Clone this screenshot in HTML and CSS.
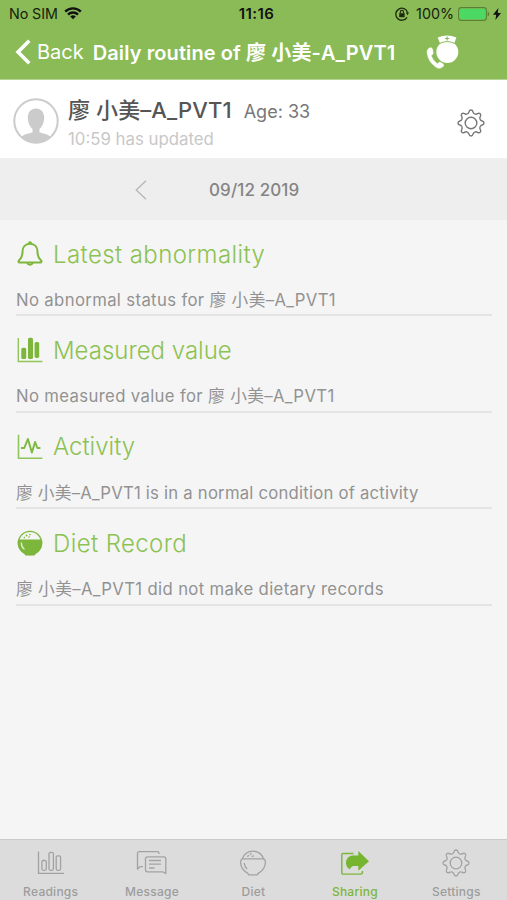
FILE: index.html
```html
<!DOCTYPE html>
<html lang="en">
  <head>
    <meta charset="UTF-8" />
    <meta name="viewport" content="width=device-width, initial-scale=1.0" />
    <title>Daily routine</title>
    <link rel="stylesheet" href="styles.css">
  </head>
  <body>
    <!-- Shared icon shapes -->
    <svg class="defs" width="0" height="0">
      <defs>
        <path id="tooth" d="M-3.75-9.05Q-2.36-9.62-2-11.2Q-1.6-13 0-13Q1.6-13 2-11.2Q2.36-9.62 3.75-9.05" />
        <g id="gear">
          <use href="#tooth" />
          <use href="#tooth" transform="rotate(45)" />
          <use href="#tooth" transform="rotate(90)" />
          <use href="#tooth" transform="rotate(135)" />
          <use href="#tooth" transform="rotate(180)" />
          <use href="#tooth" transform="rotate(225)" />
          <use href="#tooth" transform="rotate(270)" />
          <use href="#tooth" transform="rotate(315)" />
          <circle r="5.8" />
        </g>
      </defs>
    </svg>

    <header class="header">
      <div class="status-bar">
        <div class="status-left">
          <span class="carrier">No SIM</span>
          <svg width="18" height="13" viewBox="0 0 18 13" fill="none" stroke="#111" stroke-width="2.4">
            <path d="M1.2 4.6a11 11 0 0 1 15.6 0M4 7.6a7 7 0 0 1 10 0" />
            <path d="M9 12.3L6.2 9.5a4 4 0 0 1 5.6 0z" fill="#111" stroke="none" />
          </svg>
        </div>
        <div class="clock">11:16</div>
        <div class="status-right">
          <svg width="14" height="14" viewBox="0 0 14 14" fill="none" stroke="#1c2a10">
            <path d="M12.6 5.6A6 6 0 1 0 12 10.3" stroke-width="1.3" />
            <path d="M10.8 5.6h3.2l-1.5 2.6z" fill="#1c2a10" stroke="none" />
            <rect x="4.2" y="6.2" width="5.4" height="4" fill="#1c2a10" stroke="none" />
            <path d="M5.3 6.3V5a1.6 1.6 0 0 1 3.2 0v1.3" stroke-width="1.1" />
          </svg>
          <span class="percent">100%</span>
          <svg class="battery" width="33" height="14" viewBox="0 0 33 14">
            <rect x=".6" y=".6" width="27.8" height="12.8" rx="2.8" fill="none" stroke="#5c7f36" stroke-width="1.1" />
            <rect x="1.8" y="1.8" width="25.4" height="10.4" rx="1.4" fill="#4bd964" />
            <path d="M29.7 4.6a2.6 2.6 0 0 1 0 4.8z" fill="#5c7f36" />
          </svg>
          <svg width="8" height="12" viewBox="0 0 8 12"><path d="M5.4 0L0 6.8h3.2L2.4 12 8 4.9H4.7z" fill="#111" /></svg>
        </div>
      </div>
      <div class="nav-bar">
        <svg class="back-icon" width="17" height="26" viewBox="0 0 17 26"><path d="M14.3 1.7L3 13l11.3 11.3" fill="none" stroke="#fff" stroke-width="3.6" /></svg>
        <span class="back">Back</span>
        <h1 class="title">Daily routine of 廖 小美-A_PVT1</h1>
        <svg class="nurse" width="34" height="35" viewBox="0 0 34 35" fill="#fff">
          <circle cx="21.3" cy="17" r="11" />
          <path d="M11.7 2.6Q21-1.8 30.4 2.6L28.3 8.2Q21.2 4.6 14 8.2z" />
          <path d="M13.2 8.6Q21.2 4.6 29 8.6" fill="none" stroke="#8abb57" stroke-width="1" />
          <path d="M21.1 1.5v4M19.1 3.5h4" stroke="#8abb57" stroke-width="1.2" />
          <path d="M2.1 13.4Q5.7 10.8 7.1 14.5L7.6 18.6Q6.8 20 5.6 20.7Q7.5 25.8 11.4 28.5L13.1 26.8Q14.4 26.3 17.2 28.6Q19.2 30.3 17 32.1Q13.7 35 9.8 32.4Q1.6 26.8.6 17.5Q.5 14.7 2.1 13.4z" stroke="#8abb57" stroke-width=".4" />
        </svg>
      </div>
    </header>

    <section class="profile">
      <svg class="avatar" width="46" height="46" viewBox="0 0 46 46">
        <circle cx="23" cy="23" r="21.7" fill="#fff" stroke="#cbcbcb" stroke-width="2" />
        <path d="M23 10.5c5.2 0 8.4 3.8 8.2 9.8-.2 4.6-2 8.6-4.7 10.7v3.2c3 1.5 8 1.4 10.9 4.4A21 21 0 0 1 8.6 38.6c2.9-3 7.900-2.900 10.900-4.400V31c-2.700-2.100-4.500-6.100-4.700-10.700-.2-6 3-9.800 8.200-9.800z" fill="#cbcbcb" />
      </svg>
      <div class="person">
        <div class="person-row">
          <span class="person-name">廖 小美–A_PVT1</span>
          <span class="age">Age: 33</span>
        </div>
        <div class="updated">10:59 has updated</div>
      </div>
      <svg class="profile-gear" width="28" height="28" viewBox="-14 -14 28 28" fill="none" stroke="#777" stroke-width="1.4"><use href="#gear" /></svg>
    </section>

    <div class="date-bar">
      <svg width="12" height="20" viewBox="0 0 12 20"><path d="M11 .8L1.2 10 11 19.2" fill="none" stroke="#b4b4b4" stroke-width="1.2" /></svg>
      <span class="date">09/12 2019</span>
    </div>

    <main class="records">
      <section class="record">
        <h2 class="record-title">
          <svg width="26" height="26" viewBox="0 0 26 26" fill="none" stroke="#7cb63b" stroke-width="2" stroke-linejoin="round">
            <path d="M13 2.8c-5 0-7.5 3.6-7.5 8 0 5.2-1.2 6.7-3.5 8.6-.9.8-.7 2.2.7 2.2h20.6c1.4 0 1.6-1.4.7-2.2-2.3-1.9-3.5-3.4-3.5-8.6 0-4.4-2.5-8-7.5-8z" />
            <path d="M12 2.2a1 1 0 0 1 2 0M10.3 22a2.8 2.4 0 0 0 5.4 0" />
          </svg>
          <span class="heading heading-wide">Latest abnormality</span>
        </h2>
        <p class="record-text">No abnormal status for 廖 小美–A_PVT1</p>
      </section>
      <section class="record">
        <h2 class="record-title">
          <svg width="26" height="26" viewBox="0 0 26 26" fill="#7cb63b">
            <path d="M1.3 1v23.5H25.4" fill="none" stroke="#8fc559" stroke-width="1.4" />
            <rect x="4.3" y="10.8" width="4.9" height="11.3" rx="1.6" />
            <rect x="11" y=".8" width="5" height="21.3" rx="1.6" />
            <rect x="17.6" y="5" width="4.6" height="15.9" rx="1.6" />
          </svg>
          <span class="heading">Measured value</span>
        </h2>
        <p class="record-text">No measured value for 廖 小美–A_PVT1</p>
      </section>
      <section class="record">
        <h2 class="record-title">
          <svg width="26" height="26" viewBox="0 0 26 26" fill="none" stroke="#8fc559" stroke-width="1.6">
            <path d="M1.5.8v23.4H25.4" />
            <path d="M4 14h3.3L10.9 5l4 13.5 3.2-10.5 2.3 6h3" stroke="#7fba40" stroke-width="2" stroke-linejoin="round" />
          </svg>
          <span class="heading">Activity</span>
        </h2>
        <p class="record-text text-activity">廖 小美–A_PVT1 is in a normal condition of activity</p>
      </section>
      <section class="record">
        <h2 class="record-title">
          <svg width="26" height="26" viewBox="0 0 26 26">
            <circle cx="13" cy="13" r="11.6" fill="none" stroke="#7cb63b" stroke-width="1.3" />
            <path d="M1 9.6h24c1.3 6-1.5 11.3-6.4 13.600l-.8 2.200H8.200l-.8-2.200C2.500 20.900-.3 15.600 1 9.600z" fill="#7cb63b" />
            <path d="M4.4 13c0 3 1 4.8 2.6 5.8" fill="none" stroke="#d9ecc6" stroke-width="1.5" stroke-linecap="round" />
            <g fill="#7cb63b"><circle cx="9.5" cy="5.5" r=".9" /><circle cx="13" cy="4.6" r=".8" /><circle cx="7.3" cy="7.6" r=".8" /><circle cx="12" cy="7" r=".8" /></g>
          </svg>
          <span class="heading heading-wide">Diet Record</span>
        </h2>
        <p class="record-text">廖 小美–A_PVT1 did not make dietary records</p>
      </section>
    </main>

    <nav class="tab-bar">
      <div class="tab">
        <svg width="28" height="28" viewBox="0 0 28 28" fill="none" stroke="#a2a2a2" stroke-width="1.3">
          <path d="M1.5 2.5V24.3H27" />
          <rect x="4.9" y="11.5" width="4.4" height="9.8" rx="1.5" />
          <rect x="12" y="3.3" width="4.4" height="18" rx="1.5" />
          <rect x="19.2" y="6.8" width="4.4" height="14.5" rx="1.5" />
        </svg>
        <span>Readings</span>
      </div>
      <div class="tab">
        <svg width="32" height="28" viewBox="0 0 32 28" fill="none" stroke="#a2a2a2" stroke-width="1.3" stroke-linejoin="round">
          <path d="M23 5V4.2a1.5 1.5 0 0 0-1.5-1.5H3A1.5 1.5 0 0 0 1.5 4.2v16l2.5-2.6h3" />
          <path d="M11.5 7.8h16.3a2 2 0 0 1 2 2v14.7l-3.2-1.7H11.5a2 2 0 0 1-2-2v-11a2 2 0 0 1 2-2z" />
          <path d="M13 11.5h12M13 15.2h12M13 19h5.5" />
        </svg>
        <span>Message</span>
      </div>
      <div class="tab">
        <svg width="28" height="28" viewBox="0 0 28 28" fill="none" stroke="#a2a2a2" stroke-width="1.3" stroke-linejoin="round">
          <path d="M3.3 9.8C5.2 5 9 2.2 14 2.2s8.8 2.8 10.7 7.6" />
          <path d="M3.3 9.8h21.4c1.6.8 1.8 1.9 1.7 3.7-.2 4.7-3.2 8.6-7 10.6l-1.2 1.7H9.8l-1.2-1.7c-3.8-2-6.8-5.9-7-10.6-.1-1.8.1-2.9 1.7-3.7z" />
          <path d="M5.2 14c.2 2.7 1.1 4.7 3 6.1" />
          <path d="M8.6 7.3l1-.7M11.3 5.2l1-.3M13.3 7.5l1-.6" stroke-linecap="round" />
        </svg>
        <span>Diet</span>
      </div>
      <div class="tab tab-sharing">
        <svg width="30" height="28" viewBox="0 0 30 28">
          <path d="M13.5 4.5H3A1.2 1.2 0 0 0 1.8 5.7v18.2A1.2 1.2 0 0 0 3 25.1h17.5a2 2 0 0 0 2-2v-1" fill="none" stroke="#7cb63b" stroke-width="1.4" />
          <path d="M18.3 2L29 12.2 18.3 21.8V17h-4.5c-1.9 0-3 1.2-4 3.5C6.5 18.5 5.4 15 6.2 12c1-3.8 3.8-5.4 7.5-5.4h4.6z" fill="#75b52f" />
        </svg>
        <span>Sharing</span>
      </div>
      <div class="tab">
        <svg width="28" height="28" viewBox="-14 -14 28 28" fill="none" stroke="#a2a2a2" stroke-width="1.3"><use href="#gear" /></svg>
        <span>Settings</span>
      </div>
    </nav>
  </body>
</html>
```

FILE: styles.css
```css
* {
  box-sizing: border-box;
}
body {
  font-family: Inter, "Noto Sans CJK TC", sans-serif;
  height: 900px;
  display: flex;
  flex-flow: column;
  background-color: #f5f5f5;
  margin: 0;
  overflow: hidden;
  white-space: nowrap;
}
svg {
  display: block;
  flex: none;
}
.defs {
  position: absolute;
}
.header {
  height: 80px;
  background-color: #8abb57;
  border-bottom: 1px solid #b5d395;
}
.status-bar {
  display: grid;
  grid-template-columns: 1fr auto 1fr;
  align-items: center;
  height: 26px;
  padding: 1px 6px 0 9px;
  font-size: 14.3px;
  color: #17210d;
}
.status-left,
.status-right {
  display: flex;
  align-items: center;
}
.status-left {
  gap: 6px;
}
.carrier {
  letter-spacing: -0.1px;
}
.status-right {
  justify-content: flex-end;
}
.percent {
  margin: 0 4px 0 7px;
}
.battery {
  margin-right: 2px;
}
.clock {
  font-size: 15px;
  font-weight: 600;
  letter-spacing: 0.4px;
  margin-right: -3px;
  color: #111;
}
.nav-bar {
  display: flex;
  align-items: center;
  height: 52px;
  padding-left: 15px;
  color: #fff;
}
.back {
  font-size: 20px;
  margin: 0 0 1px 5px;
}
.title {
  font-size: 20px;
  font-weight: 600;
  letter-spacing: 0.1px;
  margin: 0 0 2px 9px;
}
.nurse {
  margin: 1px 0 0 31px;
}
.profile {
  display: flex;
  align-items: flex-start;
  height: 79px;
  background-color: #fff;
  border-bottom: 1px solid #f0f0f0;
  padding-left: 13px;
}
.avatar {
  margin-top: 18px;
}
.person {
  margin: 11px 0 0 9px;
}
.person-row {
  display: flex;
  align-items: center;
  height: 36px;
  gap: 12px;
}
.person-name {
  font-size: 22px;
  font-weight: 500;
  letter-spacing: 0.1px;
  color: #555;
  padding-bottom: 3px;
}
.age {
  font-size: 18px;
  color: #777;
  padding-top: 5px;
}
.updated {
  font-size: 16.8px;
  line-height: 24px;
  color: #c8c8c8;
}
.profile-gear {
  margin: 29px 22px 0 auto;
}
.date-bar {
  display: flex;
  align-items: center;
  gap: 62px;
  height: 61px;
  padding-left: 135px;
  background-color: #eee;
}
.date {
  font-size: 17px;
  font-weight: 500;
  letter-spacing: 0.1px;
  color: #858585;
}
.records {
  flex: 1;
  padding: 0 15px 0 16px;
}
.record {
  height: 96.5px;
  border-bottom: 2px solid #e4e4e4;
  padding-top: 19px;
}
.record:first-child {
  height: 96px;
}
.record-title {
  display: flex;
  align-items: center;
  height: 30px;
  gap: 10px;
  margin: 0 0 0 1px;
}
.heading {
  font-size: 24px;
  font-weight: 300;
  color: #8cc252;
}
.heading-wide {
  letter-spacing: 0.4px;
}
.record-text {
  font-size: 16.7px;
  line-height: 24px;
  letter-spacing: 0.36px;
  color: #929292;
  margin: 19px 0 0;
}
.text-activity {
  letter-spacing: 0.22px;
}
.tab-bar {
  display: grid;
  grid-template-columns: repeat(5, 1fr);
  height: 61px;
  background-color: #dcdcdc;
  border-top: 1px solid #cacaca;
}
.tab {
  display: flex;
  flex-flow: column;
  align-items: center;
  padding-top: 9px;
  font-size: 12px;
  font-weight: 500;
  letter-spacing: 0.25px;
  color: #9c9c9c;
}
.tab span {
  line-height: 16px;
  margin-top: 7px;
}
.tab-sharing {
  color: #7cb63b;
}
```
